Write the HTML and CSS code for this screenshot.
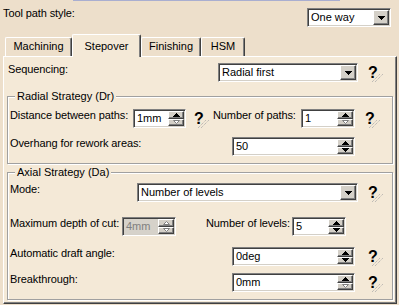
FILE: index.html
```html
<!doctype html>
<html>
<head>
  <title>Stepover</title>
  <link rel="stylesheet" href="styles.css">
</head>
<body>
  <div class="topline"></div>
  <div class="head">
    <span class="lbl">Tool path style:</span>
    <div class="combo w-style"><span class="val">One way</span><b class="btn"><svg width="7" height="4"><path d="M0 0h7v1h-1v1h-1v1h-1v1h-1v-1h-1v-1h-1v-1h-1z"/></svg></b></div>
  </div>

  <div class="tabs">
    <div class="tab w-mach">Machining</div>
    <div class="tab on w-step">Stepover</div>
    <div class="tab w-fin">Finishing</div>
    <div class="tab w-hsm">HSM</div>
  </div>

  <div class="panel">
    <div class="row seq">
      <span class="lbl l-seq">Sequencing:</span>
      <div class="combo w-seq"><span class="val">Radial first</span><b class="btn"><svg width="7" height="4"><path d="M0 0h7v1h-1v1h-1v1h-1v1h-1v-1h-1v-1h-1v-1h-1z"/></svg></b></div>
      <span class="help">?<svg width="11" height="8"><path d="M0 8L8 0M3 8L11 0"/></svg></span>
    </div>

    <fieldset class="grp radial">
      <legend>Radial Strategy (Dr)</legend>
      <div class="row r1">
        <span class="lbl l-dist">Distance between paths:</span>
        <div class="spin w-small"><span class="val">1mm</span>
          <span class="btns">
            <b><svg width="7" height="4"><path d="M3 0h1v1h1v1h1v1h1v1h-7v-1h1v-1h1v-1h1z"/></svg></b>
            <b><svg width="7" height="4" class="hollow"><polygon points="0.5,0.5 6.5,0.5 3.5,3.5"/></svg></b>
          </span>
        </div>
        <span class="help h-dist">?<svg width="11" height="8"><path d="M0 8L8 0M3 8L11 0"/></svg></span>
        <span class="lbl l-npaths">Number of paths:</span>
        <div class="spin w-small2"><span class="val">1</span>
          <span class="btns">
            <b><svg width="7" height="4"><path d="M3 0h1v1h1v1h1v1h1v1h-7v-1h1v-1h1v-1h1z"/></svg></b>
            <b><svg width="7" height="4" class="hollow"><polygon points="0.5,0.5 6.5,0.5 3.5,3.5"/></svg></b>
          </span>
        </div>
        <span class="help h-npaths">?<svg width="11" height="8"><path d="M0 8L8 0M3 8L11 0"/></svg></span>
      </div>
      <div class="row r2">
        <span class="lbl l-wide">Overhang for rework areas:</span>
        <div class="spin w-wide"><span class="val">50</span>
          <span class="btns">
            <b><svg width="7" height="4"><path d="M3 0h1v1h1v1h1v1h1v1h-7v-1h1v-1h1v-1h1z"/></svg></b>
            <b><svg width="7" height="4"><path d="M0 0h7v1h-1v1h-1v1h-1v1h-1v-1h-1v-1h-1v-1h-1z"/></svg></b>
          </span>
        </div>
      </div>
    </fieldset>

    <fieldset class="grp axial">
      <legend>Axial Strategy (Da)</legend>
      <div class="row a1">
        <span class="lbl l-mode">Mode:</span>
        <div class="combo w-mode"><span class="val">Number of levels</span><b class="btn"><svg width="7" height="4"><path d="M0 0h7v1h-1v1h-1v1h-1v1h-1v-1h-1v-1h-1v-1h-1z"/></svg></b></div>
        <span class="help">?<svg width="11" height="8"><path d="M0 8L8 0M3 8L11 0"/></svg></span>
      </div>
      <div class="row a2">
        <span class="lbl l-depth">Maximum depth of cut:</span>
        <div class="spin dis w-small2"><span class="val">4mm</span>
          <span class="btns">
            <b><svg width="7" height="4" class="hollow"><polygon points="3.5,0.5 6.5,3.5 0.5,3.5"/></svg></b>
            <b><svg width="7" height="4" class="hollow"><polygon points="0.5,0.5 6.5,0.5 3.5,3.5"/></svg></b>
          </span>
        </div>
        <span class="lbl l-nlev">Number of levels:</span>
        <div class="spin w-small2"><span class="val">5</span>
          <span class="btns">
            <b><svg width="7" height="4"><path d="M3 0h1v1h1v1h1v1h1v1h-7v-1h1v-1h1v-1h1z"/></svg></b>
            <b><svg width="7" height="4"><path d="M0 0h7v1h-1v1h-1v1h-1v1h-1v-1h-1v-1h-1v-1h-1z"/></svg></b>
          </span>
        </div>
      </div>
      <div class="row a3">
        <span class="lbl l-wide">Automatic draft angle:</span>
        <div class="spin w-wide"><span class="val">0deg</span>
          <span class="btns">
            <b><svg width="7" height="4"><path d="M3 0h1v1h1v1h1v1h1v1h-7v-1h1v-1h1v-1h1z"/></svg></b>
            <b><svg width="7" height="4"><path d="M0 0h7v1h-1v1h-1v1h-1v1h-1v-1h-1v-1h-1v-1h-1z"/></svg></b>
          </span>
        </div>
        <span class="help h-far">?<svg width="11" height="8"><path d="M0 8L8 0M3 8L11 0"/></svg></span>
      </div>
      <div class="row a4">
        <span class="lbl l-wide">Breakthrough:</span>
        <div class="spin w-wide"><span class="val">0mm</span>
          <span class="btns">
            <b><svg width="7" height="4"><path d="M3 0h1v1h1v1h1v1h1v1h-7v-1h1v-1h1v-1h1z"/></svg></b>
            <b><svg width="7" height="4" class="hollow"><polygon points="0.5,0.5 6.5,0.5 3.5,3.5"/></svg></b>
          </span>
        </div>
        <span class="help h-far">?<svg width="11" height="8"><path d="M0 8L8 0M3 8L11 0"/></svg></span>
      </div>
    </fieldset>
  </div>
</body>
</html>
```

FILE: styles.css
```css
*,
*::before,
*::after {
  box-sizing: border-box;
}

body {
  margin: 0;
  width: 399px;
  height: 305px;
  overflow: hidden;
  background: #eddfcb;
  font-family: "Liberation Sans", Arial, sans-serif;
  font-size: 11px;
  line-height: 13px;
  color: #000;
}

.topline {
  margin-left: 73px;
  width: 267px;
  height: 1px;
  background: #a9aed0;
}

.head {
  display: flex;
  align-items: flex-start;
  height: 26px;
  padding: 7px 0 0 3px;
}

.head .lbl {
  width: 304px;
  margin-top: -1px;
}

/* sunken fields */
.combo,
.spin {
  display: flex;
  height: 19px;
  padding: 1px;
  background: #fff;
  border: 1px solid;
  border-color: #808080 #fff #fff #808080;
  box-shadow: inset 1px 1px #404040, inset -1px -1px #d4d0c8;
}

.val {
  flex: 1;
  padding-left: 2px;
  line-height: 15px;
  white-space: nowrap;
  overflow: hidden;
}

.combo .btn,
.btns b {
  display: flex;
  align-items: center;
  justify-content: center;
  background: #d4d0c8;
  border: 1px solid;
  border-color: #fff #404040 #404040 #fff;
  box-shadow: inset -1px -1px #808080;
}

.combo .btn {
  width: 16px;
  height: 15px;
}

.btns {
  display: flex;
  flex-direction: column;
  width: 16px;
}

.btns b {
  height: 7.5px;
}

svg path {
  fill: #000;
}

svg.hollow polygon {
  fill: #fff;
  stroke: #808080;
  stroke-width: 1;
}

.spin.dis {
  background: #d6d2ca;
  color: #808080;
}

.help {
  position: relative;
  align-self: center;
  width: 12px;
  margin-left: 10px;
  font-size: 16px;
  font-weight: bold;
  line-height: 16px;
}

.help svg {
  position: absolute;
  left: 4px;
  top: 9px;
}

.help svg path {
  fill: none;
  stroke: #a8a8a8;
  stroke-width: 1;
  stroke-dasharray: 1 1;
}

/* tabs */
.tabs {
  display: flex;
  align-items: flex-end;
  height: 29px;
  padding: 7px 0 0 5px;
}

.tab {
  height: 19px;
  padding-top: 2px;
  text-align: center;
  border-top: 1px solid #fff;
  border-left: 1px solid #fff;
  border-right: 1px solid #404040;
  border-radius: 2px 2px 0 0;
  box-shadow: inset -1px 0 #808080;
}

.tab.on {
  position: relative;
  z-index: 1;
  height: 23px;
  margin-bottom: -1px;
  padding-top: 5px;
  background: #f4e9d7;
}

.w-mach { width: 67px; }
.w-step { width: 69px; }
.w-fin { width: 60px; }
.w-hsm { width: 44px; }

.panel {
  margin-left: 3px;
  width: 394px;
  height: 248px;
  padding-top: 6px;
  background: #f4e9d7;
  border: 1px solid;
  border-color: #fff #404040 #404040 #fff;
  box-shadow: inset -1px -1px #808080;
}

.row {
  display: flex;
  align-items: flex-start;
}

.seq {
  padding-left: 4px;
}

/* group boxes */
.grp {
  min-width: 0;
  width: 386px;
  margin: 7px 0 0 3px;
  padding: 0 0 7px 2px;
  border: 1px solid #a0a0a0;
  box-shadow: inset 1px 1px #fff, 1px 1px #fff;
}

.grp.axial {
  margin-top: 1px;
}

legend {
  margin-left: 5px;
  padding: 0 2px;
  line-height: 14px;
  background: #f4e9d7;
}

.r1 { margin-top: 6px; }
.r2 { margin-top: 9px; }
.a1 { margin-top: 4px; }
.a2 { margin-top: 15px; }
.a3 { margin-top: 11px; }
.a4 { margin-top: 7px; }

.lbl {
  white-space: nowrap;
  letter-spacing: -0.1px;
}

.l-seq { width: 210px; }
.l-dist { width: 123px; }
.l-npaths { width: 88px; margin-left: 7px; }
.l-wide { width: 222px; }
.l-mode { width: 127px; }
.l-depth { width: 112px; }
.l-nlev { width: 86px; margin-left: 30px; }

.h-dist { margin-left: 8px; }
.h-npaths { margin-left: 10px; }
.h-far { margin-left: 13px; }

.w-style { width: 84px; }
.w-seq { width: 140px; }
.w-mode { width: 221px; }
.w-small { width: 53px; }
.w-small2 { width: 54px; }
.w-wide { width: 123px; }
```
